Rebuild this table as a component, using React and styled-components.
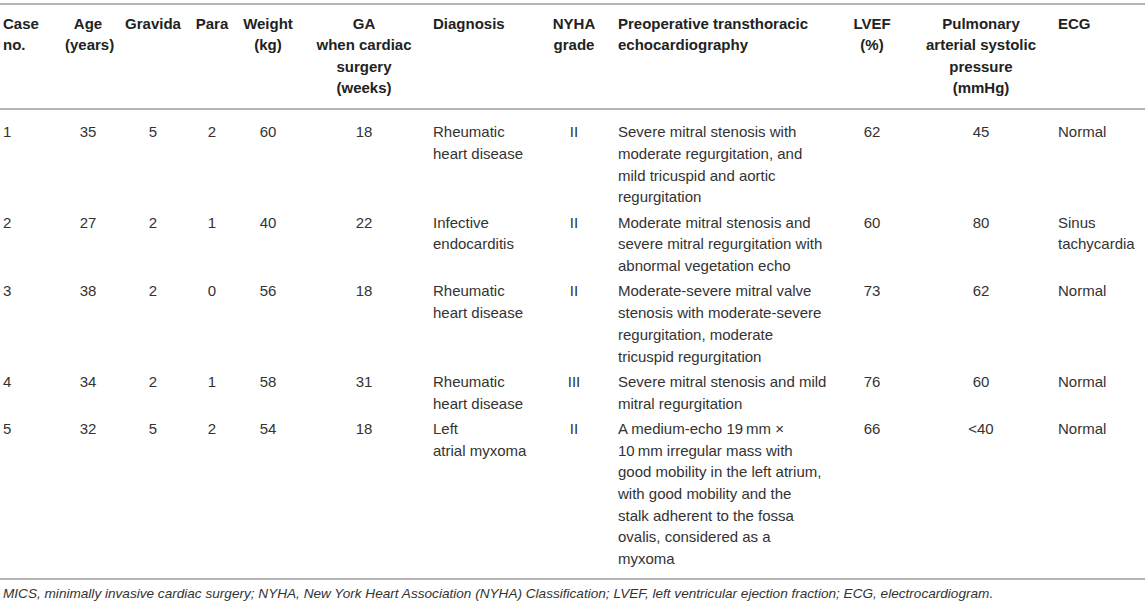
import React from 'react'
import styled, { createGlobalStyle } from 'styled-components'

const GlobalStyle = createGlobalStyle`
  html, body {
    margin: 0;
    padding: 0;
    background: #fff;
  }
  body {
    font-family: 'Liberation Sans', Arial, sans-serif;
    color: #333;
  }
`

const columns = [
  { key: 'no', label: 'Case\nno.', width: 59, align: 'left' },
  { key: 'age', label: 'Age\n(years)', width: 58, align: 'center' },
  { key: 'gravida', label: 'Gravida', width: 72, align: 'center' },
  { key: 'para', label: 'Para', width: 46, align: 'center' },
  { key: 'weight', label: 'Weight\n(kg)', width: 66, align: 'center' },
  { key: 'ga', label: 'GA\nwhen cardiac\nsurgery\n(weeks)', width: 126, align: 'center' },
  { key: 'diagnosis', label: 'Diagnosis', width: 109, align: 'left' },
  { key: 'nyha', label: 'NYHA\ngrade', width: 76, align: 'center' },
  { key: 'echo', label: 'Preoperative transthoracic\nechocardiography', width: 222, align: 'left' },
  { key: 'lvef', label: 'LVEF\n(%)', width: 76, align: 'center' },
  { key: 'pasp', label: 'Pulmonary\narterial systolic\npressure\n(mmHg)', width: 142, align: 'center' },
  { key: 'ecg', label: 'ECG', width: 93, align: 'left' },
]

const rows = [
  {
    no: '1', age: '35', gravida: '5', para: '2', weight: '60', ga: '18',
    diagnosis: 'Rheumatic heart disease', nyha: 'II',
    echo: 'Severe mitral stenosis with moderate regurgitation, and mild tricuspid and aortic regurgitation',
    lvef: '62', pasp: '45', ecg: 'Normal',
  },
  {
    no: '2', age: '27', gravida: '2', para: '1', weight: '40', ga: '22',
    diagnosis: 'Infective endocarditis', nyha: 'II',
    echo: 'Moderate mitral stenosis and severe mitral regurgitation with abnormal vegetation echo',
    lvef: '60', pasp: '80', ecg: 'Sinus tachycardia',
  },
  {
    no: '3', age: '38', gravida: '2', para: '0', weight: '56', ga: '18',
    diagnosis: 'Rheumatic heart disease', nyha: 'II',
    echo: 'Moderate-severe mitral valve stenosis with moderate-severe regurgitation, moderate tricuspid regurgitation',
    lvef: '73', pasp: '62', ecg: 'Normal',
  },
  {
    no: '4', age: '34', gravida: '2', para: '1', weight: '58', ga: '31',
    diagnosis: 'Rheumatic heart disease', nyha: 'III',
    echo: 'Severe mitral stenosis and mild mitral regurgitation',
    lvef: '76', pasp: '60', ecg: 'Normal',
  },
  {
    no: '5', age: '32', gravida: '5', para: '2', weight: '54', ga: '18',
    diagnosis: 'Left\natrial myxoma', nyha: 'II',
    echo: 'A medium-echo 19\u202Fmm \u00D7 10\u202Fmm irregular mass with good mobility in the left atrium, with good mobility and the\nstalk adherent to the fossa ovalis, considered as a myxoma',
    lvef: '66', pasp: '<40', ecg: 'Normal',
  },
]

const Figure = styled.div`
  width: 1145px;
  padding-top: 3px;
`

const Table = styled.table`
  width: 1145px;
  table-layout: fixed;
  border-collapse: separate;
  border-spacing: 0;
`

const Col = styled.col`
  width: ${p => p.$width}px;
`

const HeadCell = styled.th`
  padding: 8px 6px 9.5px;
  border-top: 2px solid #b4b4b4;
  border-bottom: 2px solid #b4b4b4;
  font-size: 15px;
  line-height: 21.3px;
  font-weight: bold;
  color: #222;
  text-align: ${p => p.$align};
  vertical-align: top;
  white-space: pre-line;
  &:first-child {
    padding-left: 3px;
  }
`

const Row = styled.tr`
  &:first-child td {
    padding-top: 11.7px;
  }
  &:last-child td {
    padding-bottom: 8.4px;
    border-bottom: 2px solid #b4b4b4;
  }
`

const Cell = styled.td`
  padding: 2px 6px 1.6px;
  font-size: 15px;
  line-height: 21.7px;
  color: #333;
  text-align: ${p => p.$align};
  vertical-align: top;
  white-space: pre-line;
  &:first-child {
    padding-left: 3px;
  }
`

const Footnote = styled.p`
  margin: 5px 0 0;
  padding-left: 3px;
  font-style: italic;
  font-size: 13.6px;
  line-height: 17px;
  color: #333;
`

export default function App() {
  return (
    <Figure>
      <GlobalStyle />
      <Table>
        <colgroup>
          {columns.map(c => <Col key={c.key} $width={c.width} />)}
        </colgroup>
        <thead>
          <tr>
            {columns.map(c => (
              <HeadCell key={c.key} $align={c.align}>{c.label}</HeadCell>
            ))}
          </tr>
        </thead>
        <tbody>
          {rows.map(r => (
            <Row key={r.no}>
              {columns.map(c => (
                <Cell key={c.key} $align={c.align}>{r[c.key]}</Cell>
              ))}
            </Row>
          ))}
        </tbody>
      </Table>
      <Footnote>
        MICS, minimally invasive cardiac surgery; NYHA, New York Heart Association (NYHA) Classification; LVEF, left ventricular ejection fraction; ECG, electrocardiogram.
      </Footnote>
    </Figure>
  )
}
